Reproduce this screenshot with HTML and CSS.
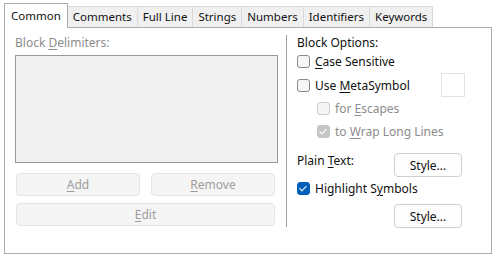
FILE: index.html
```html
<!DOCTYPE html>
<html>

<head>
    <title>Block Options</title>
    <link rel="stylesheet" href="styles.css">
</head>

<body>
    <div class="tabs">
        <div class="tab active">Common</div>
        <div class="tab">Comments</div>
        <div class="tab">Full Line</div>
        <div class="tab">Strings</div>
        <div class="tab">Numbers</div>
        <div class="tab">Identifiers</div>
        <div class="tab">Keywords</div>
    </div>
    <div class="panel">
        <div class="left-col">
            <div class="label disabled">Block <u>D</u>elimiters:</div>
            <div class="listbox"></div>
            <div class="btn-row">
                <button class="btn" disabled><u>A</u>dd</button>
                <button class="btn" disabled><u>R</u>emove</button>
            </div>
            <button class="btn wide" disabled><u>E</u>dit</button>
        </div>
        <div class="right-col">
            <div class="label">Block Options:</div>
            <label class="check"><span class="box"></span><span><u>C</u>ase Sensitive</span></label>
            <div class="meta-row">
                <label class="check"><span class="box"></span><span>Use <u>M</u>etaSymbol</span></label>
                <span class="meta-input"></span>
            </div>
            <label class="check sub disabled"><span class="box"></span><span>for <u>E</u>scapes</span></label>
            <label class="check sub disabled"><span class="box checked"></span><span>to <u>W</u>rap Long Lines</span></label>
            <div class="style-row">
                <span class="label">Plain <u>T</u>ext:</span>
                <button class="btn style-btn">Style...</button>
            </div>
            <label class="check"><span class="box checked"></span><span>Highlight S<u>y</u>mbols</span></label>
            <div class="style-row end">
                <button class="btn style-btn">Style...</button>
            </div>
        </div>
    </div>
</body>

</html>
```

FILE: styles.css
```css
body {
    font-family: "Noto Sans", sans-serif;
    font-size: 12px;
    margin: 0;
    background-color: white;
    color: #111;
}

u {
    text-decoration-thickness: 1px;
    text-underline-offset: 2px;
}

.tabs {
    display: flex;
    align-items: flex-end;
    padding-left: 4px;
    margin-top: 3px;
    height: 24px;
    font-size: 11.5px;
}

.tab {
    height: 21px;
    line-height: 20px;
    padding: 0 5px;
    border: 1px solid #d9d9d9;
    border-bottom: none;
    border-left: none;
    background-color: #f0f0f0;
    box-sizing: border-box;
}

.tab.active {
    height: 25px;
    line-height: 24px;
    padding: 0 6px;
    background-color: white;
    border: 1px solid #adadad;
    border-bottom: none;
    position: relative;
    top: 1px;
}

.panel {
    display: flex;
    margin-left: 4px;
    width: 488px;
    height: 227px;
    border: 1px solid #adadad;
    box-sizing: border-box;
    padding-top: 7px;
}

.label {
    line-height: 16px;
}

.disabled {
    color: #8c8c8c;
}

.left-col {
    width: 282px;
    height: 192px;
    border-right: 1px solid #a0a0a0;
    padding-left: 10px;
    box-sizing: border-box;
}

.listbox {
    margin-top: 4px;
    width: 263px;
    height: 108px;
    border: 1px solid #9a9a9a;
    background-color: #f0f0f0;
    box-sizing: border-box;
}

.btn {
    font-family: inherit;
    font-size: 12px;
    height: 23px;
    border: 1px solid #d0d0d0;
    border-radius: 4px;
    background-color: #fdfdfd;
    color: #111;
    padding: 0;
}

.btn:disabled {
    background-color: #f5f5f5;
    border-color: #e5e5e5;
    color: #9d9d9d;
}

.btn-row {
    display: flex;
    gap: 11px;
    margin-top: 10px;
    padding-left: 1px;
}

.btn-row .btn {
    width: 124px;
}

.btn.wide {
    margin-top: 7px;
    margin-left: 1px;
    width: 259px;
}

.right-col {
    padding-left: 10px;
    display: flex;
    flex-direction: column;
}

.check {
    display: flex;
    align-items: center;
    gap: 5px;
    height: 23px;
}

.right-col > .check:first-of-type {
    margin-top: -1px;
}

.box {
    width: 13px;
    height: 13px;
    border: 1px solid #8a8a8a;
    border-radius: 3px;
    background-color: #f7f7f7;
    box-sizing: border-box;
    position: relative;
}

.box.checked {
    background-color: #005fb8;
    border-color: #005fb8;
}

.box.checked::after {
    content: "";
    position: absolute;
    left: 3px;
    top: 1px;
    width: 3px;
    height: 6px;
    border: solid white;
    border-width: 0 1px 1px 0;
    transform: rotate(45deg);
}

.check.sub {
    padding-left: 20px;
}

.check.disabled .box {
    border-color: #cdcdcd;
    background-color: #f5f5f5;
}

.check.disabled .box.checked {
    background-color: #c5c5c5;
    border-color: #c5c5c5;
}

.meta-row {
    display: flex;
    justify-content: space-between;
    align-items: center;
    height: 24px;
    width: 168px;
}

.meta-input {
    width: 24px;
    height: 24px;
    border: 1px solid #e2e2e2;
    box-sizing: border-box;
}

.style-row {
    display: flex;
    justify-content: space-between;
    align-items: center;
    width: 165px;
    margin-top: 10px;
}

.style-row .label {
    margin-top: -8px;
}

.style-row.end {
    justify-content: flex-end;
    margin-top: 4px;
}

.style-btn {
    width: 68px;
    height: 24px;
}
```
